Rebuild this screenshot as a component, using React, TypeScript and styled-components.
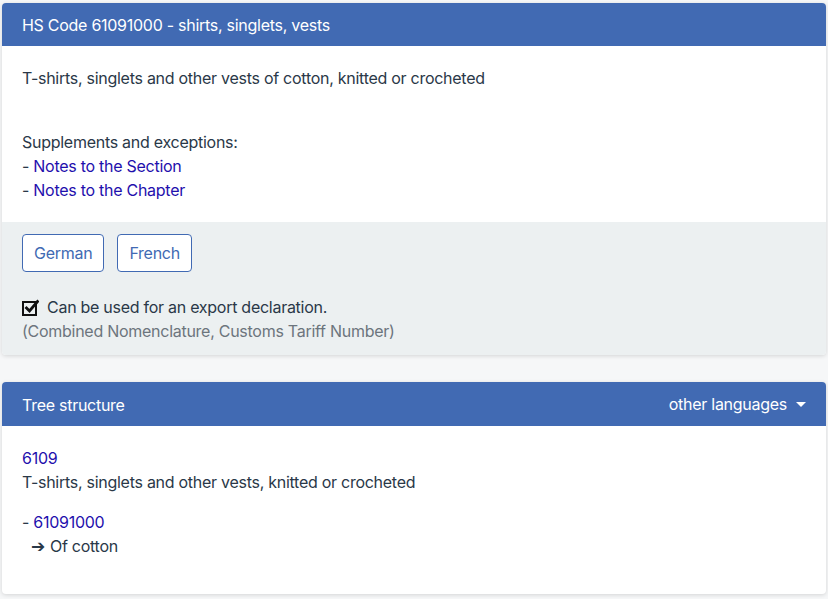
import React from "react";
import styled, { createGlobalStyle } from "styled-components";

const GlobalStyle = createGlobalStyle`
  html, body {
    margin: 0;
    padding: 0;
    background: #f6f7f8;
  }
  body {
    font-family: Inter, "Noto Sans", "DejaVu Sans", sans-serif;
    font-size: 16px;
    line-height: 24px;
    letter-spacing: -0.27px;
    color: #2a3848;
  }
  * { box-sizing: border-box; }
`;

const Page = styled.main`
  display: flex;
  flex-direction: column;
  gap: 27px;
  padding: 3px 2px 6px;
`;

const Card = styled.section`
  background: #fff;
  border-radius: 4px;
  box-shadow: 0 1px 4px rgba(0, 0, 0, 0.14);
  overflow: hidden;
`;

const CardHeader = styled.header`
  display: flex;
  align-items: center;
  justify-content: space-between;
  background: #416ab3;
  color: #fff;
  padding: 10px 20px 9px;
`;

const Title = styled.h2`
  margin: 0;
  font-size: 16px;
  font-weight: 400;
  line-height: 24px;
`;

const Dropdown = styled.button`
  display: flex;
  align-items: center;
  border: none;
  background: transparent;
  color: #fff;
  font: inherit;
  letter-spacing: inherit;
  line-height: 24px;
  padding: 0 0 1px;
  cursor: pointer;

  &::after {
    content: "";
    display: inline-block;
    margin-left: 9px;
    border-top: 5px solid #fff;
    border-left: 5px solid transparent;
    border-right: 5px solid transparent;
  }
`;

const CardBody = styled.div`
  padding: 20px;
`;

const Para = styled.p<{ $gap?: number }>`
  margin: 0 0 ${(p) => (p.$gap ?? 16)}px;
  &:last-child { margin-bottom: ${(p) => (p.$gap ?? 0)}px; }
`;

const Link = styled.a`
  color: #1f10ad;
  text-decoration: none;
`;

const CardFooter = styled.footer`
  background: #ecf0f1;
  padding: 12px 20px;
`;

const ButtonRow = styled.div`
  display: flex;
  gap: 13px;
  margin-bottom: 23px;
`;

const LangButton = styled.button`
  font: inherit;
  letter-spacing: inherit;
  color: #416ab3;
  background: #fff;
  border: 1px solid #416ab3;
  border-radius: 4px;
  padding: 6px 11px;
  line-height: 24px;
  cursor: pointer;
`;

const CheckLine = styled.div`
  display: flex;
  align-items: center;
  gap: 8px;
`;

const Muted = styled.div`
  color: #6c757d;
`;

const Indent = styled.div`
  display: flex;
  align-items: center;
  gap: 5px;
  padding-left: 9px;
`;

const Arrow = styled.span`
  font-family: "DejaVu Sans", sans-serif;
  font-size: 17px;
  font-weight: 700;
`;

const CheckIcon = () => (
  <svg width="17" height="17" viewBox="0 0 17 17" aria-hidden>
    <rect x="1" y="3" width="13" height="13" fill="none" stroke="#111" strokeWidth="2" />
    <path d="M4.5 9 L7.5 12 L15.5 2.5" fill="none" stroke="#111" strokeWidth="2.8" strokeLinecap="square" />
  </svg>
);

export default function App() {
  return (
    <>
      <GlobalStyle />
      <Page>
        <Card>
          <CardHeader>
            <Title>HS Code 61091000 - shirts, singlets, vests</Title>
          </CardHeader>
          <CardBody>
            <Para $gap={40}>T-shirts, singlets and other vests of cotton, knitted or crocheted</Para>
            <Para>
              Supplements and exceptions:
              <br />- <Link href="#">Notes to the Section</Link>
              <br />- <Link href="#">Notes to the Chapter</Link>
            </Para>
          </CardBody>
          <CardFooter>
            <ButtonRow>
              <LangButton>German</LangButton>
              <LangButton>French</LangButton>
            </ButtonRow>
            <CheckLine>
              <CheckIcon />
              <span>Can be used for an export declaration.</span>
            </CheckLine>
            <Muted>(Combined Nomenclature, Customs Tariff Number)</Muted>
          </CardFooter>
        </Card>

        <Card>
          <CardHeader>
            <Title>Tree structure</Title>
            <Dropdown>other languages</Dropdown>
          </CardHeader>
          <CardBody>
            <Para>
              <Link href="#">6109</Link>
              <br />T-shirts, singlets and other vests, knitted or crocheted
            </Para>
            <Para $gap={16}>
              - <Link href="#">61091000</Link>
              <Indent>
                <Arrow>➔</Arrow>
                <span>Of cotton</span>
              </Indent>
            </Para>
          </CardBody>
        </Card>
      </Page>
    </>
  );
}
